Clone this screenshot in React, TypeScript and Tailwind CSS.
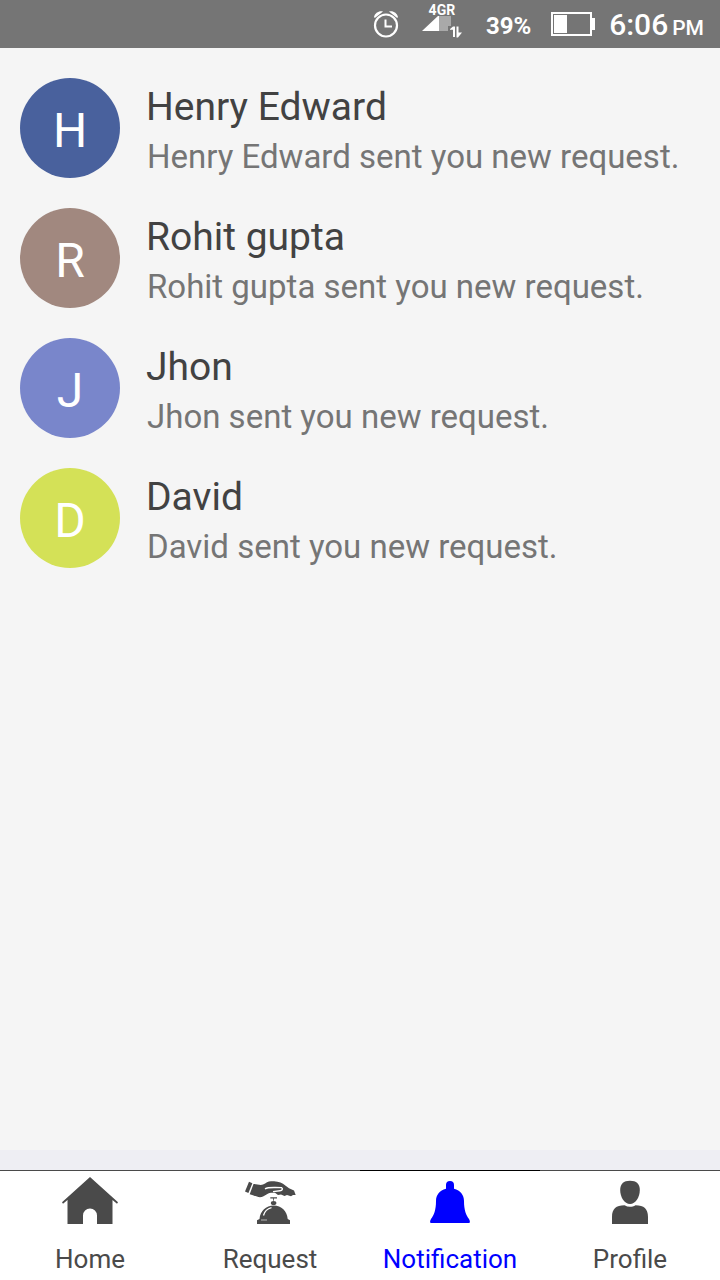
import React from 'react';

interface NotificationItem {
  id: number;
  name: string;
  color: string;
}

interface TabItem {
  key: string;
  label: string;
  icon: React.ReactNode;
}

const notifications: NotificationItem[] = [
  { id: 1, name: 'Henry Edward', color: 'bg-[#49619d]' },
  { id: 2, name: 'Rohit gupta', color: 'bg-[#a1887f]' },
  { id: 3, name: 'Jhon', color: 'bg-[#7986cb]' },
  { id: 4, name: 'David', color: 'bg-[#d4e157]' },
];

const HomeIcon = () => (
  <svg className="h-12 w-15" viewBox="0 0 60 48" fill="currentColor" aria-hidden="true">
    <path d="M30 1 L58 26.3 L57 27.8 L52.5 24 V48 H37 V39.5 A7 7 0 0 0 23 39.5 V48 H7.5 V24 L3 27.8 L2 26.3 Z" />
  </svg>
);

const RequestIcon = () => (
  <svg className="h-12 w-15" viewBox="0 0 60 48" fill="currentColor" aria-hidden="true">
    <path d="M9 5.8 L12.4 7.2 L8.4 17 L5 15.6 Z" />
    <path d="M13.5 8 C17 8 20 9.8 23 8.6 C26 7 28 5.2 31 5.2 C35 5.2 40 5.6 43 7.8 L49 12.2 L54 14.6 L55.7 19 H53 L51 20.2 L47 19 L44.5 20 L41 18.4 L38 19 L35 16.8 H31 C27 17 24.5 21.2 20 21.2 C16.5 21.2 13.5 19 9.7 18.2 Z" />
    <path d="M25 12.8 C28 11 31 11.6 41.5 11.6 C43.4 13 42 14.8 40 14.8 L33 15.6" fill="none" stroke="white" strokeWidth="1.4" />
    <path d="M30.3 21.2 H37 V22.6 H34 V24.8 H33.2 V22.6 H30.3 Z" />
    <ellipse cx="33.6" cy="27" rx="2.8" ry="2" />
    <path d="M19.5 43 C20.2 35 26 29.6 33.7 29.6 C41.5 29.6 47 35 47.7 43 L50 44.2 V48 H17 V44.2 Z" />
    <path d="M23.5 39.5 C24.5 35.5 27.3 32.6 31.5 31.6" fill="none" stroke="white" strokeWidth="1.3" />
    <path d="M21 44 H27" stroke="white" strokeWidth="0.6" />
  </svg>
);

const BellIcon = () => (
  <svg className="h-12 w-15" viewBox="0 0 60 48" fill="currentColor" aria-hidden="true">
    <path d="M26 12.8 V9 A4 4 0 0 1 34 9 V12.8 C40.5 14.6 44 19 44 25 C44 34 46 39 49 43 C50.2 45 50.2 47 49 47 H11 C9.8 47 9.8 45 11 43 C14 39 16 34 16 25 C16 19 19.5 14.6 26 12.8 Z" />
  </svg>
);

const ProfileIcon = () => (
  <svg className="h-12 w-15" viewBox="0 0 60 48" fill="currentColor" aria-hidden="true">
    <path d="M30 4.8 C36.5 4.8 39.8 8 39.8 14 C39.8 21.5 35.5 28 30 28 C24.5 28 20.2 21.5 20.2 14 C20.2 8 23.5 4.8 30 4.8 Z" />
    <path d="M24.5 29.2 C28 31.2 32 31.2 35.5 29.2 C44 29.4 48 32.5 48 41 V48 H12 V41 C12 32.5 16 29.4 24.5 29.2 Z" />
  </svg>
);

const tabs: TabItem[] = [
  { key: 'home', label: 'Home', icon: <HomeIcon /> },
  { key: 'request', label: 'Request', icon: <RequestIcon /> },
  { key: 'notification', label: 'Notification', icon: <BellIcon /> },
  { key: 'profile', label: 'Profile', icon: <ProfileIcon /> },
];

const StatusBar = () => (
  <header className="flex h-12 items-center justify-end bg-[#757575] pr-4 text-white">
    <svg className="mr-5 h-8 w-8" viewBox="0 0 32 32" fill="none" stroke="currentColor" aria-hidden="true">
      <circle cx="16" cy="17.5" r="11" strokeWidth="2.2" />
      <path d="M15.5 11.5 V18.5 H22" strokeWidth="2" />
      <path d="M4 9 C5 5 9 2.5 13 3.6 L4.8 10 Z M28 9 C27 5 23 2.5 19 3.6 L27.2 10 Z" fill="currentColor" stroke="none" />
    </svg>
    <div className="mr-6 flex h-10 flex-col items-center">
      <span className="text-[14px] leading-3 font-bold">4GR</span>
      <svg className="h-6 w-10" viewBox="0 0 40 24" fill="currentColor" aria-hidden="true">
        <path d="M17 -1 H29 V10 H26 V15 H17 Z" fill="#a9a9a9" />
        <path d="M0 15 L17 -1 V15 Z" />
        <path d="M28 13 L31 10.5 H33 V21 H31 V13.8 H28 Z M34.5 10.5 H36.5 V16.5 H40 L36 21.5 H34.5 Z" />
      </svg>
    </div>
    <span className="mr-5 pt-1 text-[24px] leading-8 font-bold">39%</span>
    <svg className="mr-3.5 h-6 w-11" viewBox="0 0 44 24" aria-hidden="true">
      <rect x="1" y="1" width="39" height="22" fill="none" stroke="white" strokeWidth="2" />
      <rect x="3" y="3" width="13" height="18" fill="white" />
      <rect x="41" y="6" width="3" height="12" fill="white" />
    </svg>
    <span className="flex items-baseline gap-1 pt-1 font-medium">
      <span className="text-[30px] leading-8">6:06</span>
      <span className="text-[21px] leading-8">PM</span>
    </span>
  </header>
);

const NotificationRow = ({ item }: { item: NotificationItem }) => (
  <li className="flex items-start gap-[26px]">
    <div className={`flex size-[100px] shrink-0 items-center justify-center rounded-full pt-1.5 text-5xl text-white ${item.color}`}>
      {item.name[0]}
    </div>
    <div className="min-w-0 pt-1">
      <h2 className="text-[39px] leading-[50px] text-[#424242]">{item.name}</h2>
      <p className="pl-px text-[33px] leading-[50px] text-[#757575]">{item.name} sent you new request.</p>
    </div>
  </li>
);

const TabBar = ({ active }: { active: string }) => (
  <nav className="grid grid-cols-4 bg-white">
    {tabs.map(tab => (
      <button
        key={tab.key}
        type="button"
        aria-current={tab.key === active ? 'page' : undefined}
        className={`flex h-[110px] flex-col items-center border-t pt-[5px] ${
          tab.key === active ? 'border-black text-[#0000ff]' : 'border-[#4a4a4a] text-[#4a4a4a]'
        }`}
      >
        {tab.icon}
        <span className="mt-[19px] text-[26px] leading-8">{tab.label}</span>
      </button>
    ))}
  </nav>
);

const App = () => {
  return (
    <div className="flex min-h-screen flex-col bg-[#f5f5f5] font-['Roboto',sans-serif]">
      <StatusBar />
      <main className="flex-1 px-5 pt-[30px]">
        <ul className="flex flex-col gap-[26px]">
          {notifications.map(item => (
            <NotificationRow key={item.id} item={item} />
          ))}
        </ul>
      </main>
      <div className="h-5 bg-[#eeeef3]" />
      <TabBar active="notification" />
    </div>
  );
};

export default App;
